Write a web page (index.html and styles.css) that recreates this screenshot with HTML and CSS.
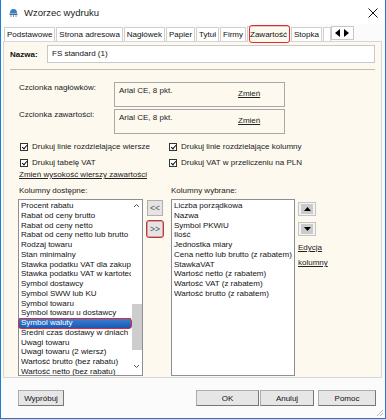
FILE: index.html
```html
<!DOCTYPE html>
<html lang="pl">

<head>
    <meta charset="UTF-8" />
    <title>Wzorzec wydruku</title>
    <link rel="stylesheet" href="styles.css">
</head>

<body>
    <div class="window">
        <div class="titlebar">
            <svg class="app-icon" width="9" height="9" viewBox="0 0 9 9">
                <path d="M1 5 Q1 1 4.5 1 Q8 1 8 5 Z" fill="#3b7fc0" />
                <rect x="0.5" y="5.5" width="8" height="1.4" fill="#2c5f96" />
                <rect x="1.5" y="7.4" width="1" height="1.3" fill="#2c5f96" />
                <rect x="4" y="7.4" width="1" height="1.3" fill="#2c5f96" />
                <rect x="6.5" y="7.4" width="1" height="1.3" fill="#2c5f96" />
            </svg>
            <span class="title">Wzorzec wydruku</span>
            <svg class="close" width="10" height="10" viewBox="0 0 10 10">
                <path d="M0.5 0.5 L9.5 9.5 M9.5 0.5 L0.5 9.5" stroke="#111" stroke-width="1" />
            </svg>
        </div>

        <div class="tabs">
            <span class="tab">Podstawowe</span>
            <span class="tab">Strona adresowa</span>
            <span class="tab">Nagłówek</span>
            <span class="tab">Papier</span>
            <span class="tab">Tytuł</span>
            <span class="tab">Firmy</span>
            <span class="tab active">Zawartość<span class="mark"></span></span>
            <span class="tab">Stopka</span>
            <span class="tab stub"></span>
            <span class="tab-arrows">
                <svg width="7" height="8" viewBox="0 0 7 8"><path d="M6 0 L6 8 L1 4 Z" fill="#000" /></svg>
                <svg width="7" height="8" viewBox="0 0 7 8"><path d="M1 0 L1 8 L6 4 Z" fill="#000" /></svg>
            </span>
        </div>

        <div class="panel">
            <div class="name-row">
                <label class="name-label">Nazwa:</label>
                <div class="text-input">FS standard (1)</div>
            </div>
            <div class="sep"></div>

            <div class="font-row first">
                <span class="font-label">Czcionka nagłówków:</span>
                <div class="font-box">
                    <span>Arial CE, 8 pkt.</span>
                    <a class="font-change">Zmień</a>
                </div>
            </div>
            <div class="font-row">
                <span class="font-label">Czcionka zawartości:</span>
                <div class="font-box">
                    <span>Arial CE, 8 pkt.</span>
                    <a class="font-change">Zmień</a>
                </div>
            </div>

            <div class="checks">
                <span class="check"><span class="box"></span>Drukuj linie rozdzielające wiersze</span>
                <span class="check"><span class="box"></span>Drukuj linie rozdzielające kolumny</span>
                <span class="check"><span class="box"></span>Drukuj tabelę VAT</span>
                <span class="check"><span class="box"></span>Drukuj VAT w przeliczeniu na PLN</span>
            </div>

            <a class="height-link">Zmień wysokość wierszy zawartości</a>

            <div class="col-labels">
                <span class="col-label">Kolumny dostępne:</span>
                <span class="col-label right">Kolumny wybrane:</span>
            </div>

            <div class="columns">
                <div class="list available">
                    <ul class="items">
                        <li>Procent rabatu</li>
                        <li>Rabat od ceny brutto</li>
                        <li>Rabat od ceny netto</li>
                        <li>Rabat od ceny netto lub brutto</li>
                        <li>Rodzaj towaru</li>
                        <li>Stan minimalny</li>
                        <li>Stawka podatku VAT dla zakupu</li>
                        <li>Stawka podatku VAT w kartotece</li>
                        <li>Symbol dostawcy</li>
                        <li>Symbol SWW lub KU</li>
                        <li>Symbol towaru</li>
                        <li>Symbol towaru u dostawcy</li>
                        <li class="selected">Symbol waluty</li>
                        <li>Średni czas dostawy w dniach</li>
                        <li>Uwagi towaru</li>
                        <li>Uwagi towaru (2 wiersz)</li>
                        <li>Wartość brutto (bez rabatu)</li>
                        <li>Wartość netto (bez rabatu)</li>
                    </ul>
                    <div class="scrollbar">
                        <svg class="chev" width="7" height="5" viewBox="0 0 7 5"><path d="M1 4 L3.5 1.5 L6 4" fill="none" stroke="#555" stroke-width="1" /></svg>
                        <div class="thumb"></div>
                        <svg class="chev" width="7" height="5" viewBox="0 0 7 5"><path d="M1 1 L3.5 3.5 L6 1" fill="none" stroke="#555" stroke-width="1" /></svg>
                    </div>
                    <span class="mark sel-mark"></span>
                </div>

                <div class="move-buttons">
                    <button class="move">&lt;&lt;</button>
                    <button class="move add">&gt;&gt;<span class="mark"></span></button>
                </div>

                <div class="list chosen">
                    <ul class="items">
                        <li>Liczba porządkowa</li>
                        <li>Nazwa</li>
                        <li>Symbol PKWiU</li>
                        <li>Ilość</li>
                        <li>Jednostka miary</li>
                        <li>Cena netto lub brutto (z rabatem)</li>
                        <li>StawkaVAT</li>
                        <li>Wartość netto (z rabatem)</li>
                        <li>Wartość VAT (z rabatem)</li>
                        <li>Wartość brutto (z rabatem)</li>
                    </ul>
                </div>

                <div class="order">
                    <button class="order-btn"><span class="inner"><svg width="7" height="4" viewBox="0 0 7 4"><path d="M0 4 L7 4 L3.5 0 Z" fill="#000" /></svg></span></button>
                    <button class="order-btn"><span class="inner"><svg width="7" height="4" viewBox="0 0 7 4"><path d="M0 0 L7 0 L3.5 4 Z" fill="#000" /></svg></span></button>
                    <a class="edit-link">Edycja<br>kolumny</a>
                </div>
            </div>
        </div>

        <div class="footer">
            <button class="btn try">Wypróbuj</button>
            <button class="btn ok">OK</button>
            <button class="btn cancel">Anuluj</button>
            <button class="btn help">Pomoc</button>
            <svg class="grip" width="9" height="9" viewBox="0 0 9 9">
                <path d="M8 2 L2 8 M8 5 L5 8" stroke="#b5b5b5" stroke-width="1" />
            </svg>
        </div>
    </div>
</body>

</html>
```

FILE: styles.css
```css
:root {
    --blue-frame: #1c7cd1;
    --cream: #fdf9ee;
    --panel-border: #d6d6d6;
    --box-border: #a8a8a8;
    --list-border: #8e8f94;
    --mark: #e12a2f;
}

* {
    margin: 0;
    padding: 0;
    box-sizing: border-box;
}

body {
    font-family: 'Liberation Sans', Arial, sans-serif;
    font-size: 8px;
    color: #111;
    background: #fff;
}

.window {
    width: 386px;
    height: 419px;
    border: 1px solid var(--blue-frame);
    border-top: none;
    background: #fbfbfb;
    display: flex;
    flex-direction: column;
    position: relative;
}

/* title bar */

.titlebar {
    height: 24px;
    background: #fff;
    display: flex;
    align-items: center;
    padding: 1px 0 0 8px;
}

.app-icon {
    margin-right: 6px;
}

.title {
    font-size: 9.5px;
    color: #1a1a1a;
}

.close {
    margin-left: auto;
    margin-right: 7px;
}

/* tabs */

.tabs {
    height: 17px;
    display: flex;
    align-items: flex-end;
    padding-left: 3px;
}

.tab {
    height: 14px;
    line-height: 13px;
    padding: 0 2px;
    border: 1px solid #d0d0d0;
    border-bottom: none;
    margin-right: 1px;
    background: #fff;
    white-space: nowrap;
    color: #111;
}

.tab.active {
    height: 16px;
    line-height: 15px;
    background: var(--cream);
    position: relative;
    margin-bottom: -1px;
    z-index: 2;
}

.tab.stub {
    width: 8px;
    margin-right: 0;
}

.tab-arrows {
    height: 14px;
    width: 23px;
    border: 1px solid #c8c8c8;
    background: #fff;
    display: flex;
    align-items: center;
    justify-content: center;
    gap: 2px;
    margin-bottom: 1px;
}

.mark {
    position: absolute;
    border: 1.5px solid var(--mark);
    border-radius: 3px;
    pointer-events: none;
}

.tab.active .mark {
    left: 1px;
    right: -1px;
    top: -2px;
    bottom: -1px;
}

/* panel */

.panel {
    height: 337px;
    margin: 0 3px 0 2px;
    background: var(--cream);
    border: 1px solid var(--panel-border);
    display: flex;
    flex-direction: column;
}

.name-row {
    display: flex;
    align-items: center;
    margin: 3px 0 0 6px;
}

.name-label {
    width: 37px;
    font-weight: bold;
}

.text-input {
    width: 328px;
    height: 18px;
    line-height: 16px;
    padding-left: 4px;
    background: #fff;
    border: 1px solid #c9c9c9;
}

.sep {
    height: 1px;
    margin: 6px 6px 0;
    background: #bdbdbd;
}

.font-row {
    display: flex;
    margin: 2px 0 0 15px;
}

.font-row.first {
    margin-top: 12px;
}

.font-label {
    width: 95px;
    padding-top: 1px;
    color: #222;
}

.font-box {
    width: 171px;
    height: 25px;
    border: 1px solid var(--box-border);
    padding: 3px 0 0 4px;
    display: flex;
    color: #222;
}

.font-change {
    margin: 3px 0 0 auto;
    width: 46px;
    text-decoration: underline;
}

.checks {
    display: grid;
    grid-template-columns: 149px auto;
    row-gap: 5px;
    margin: 7px 0 0 15px;
}

.check {
    display: flex;
    align-items: center;
    height: 11px;
    color: #222;
}

.box {
    width: 8px;
    height: 8px;
    border: 1px solid #333;
    background: #fff;
    margin: 0 4px 0 1px;
    position: relative;
}

.box::after {
    content: "";
    position: absolute;
    left: 1.5px;
    top: 0;
    width: 2px;
    height: 4px;
    border: solid #111;
    border-width: 0 1.3px 1.3px 0;
    transform: rotate(40deg);
}

.height-link {
    margin: 2px 0 0 15px;
    line-height: 10px;
    text-decoration: underline;
    color: #222;
}

.col-labels {
    display: flex;
    margin: 6px 0 0 15px;
    line-height: 10px;
    color: #222;
}

.col-label {
    width: 152px;
}

.columns {
    display: flex;
    margin: 3px 0 0 14px;
}

.list {
    height: 177px;
    background: #fff;
    border: 1px solid var(--list-border);
    display: flex;
}

.list.available {
    width: 125px;
    position: relative;
}

.list.chosen {
    width: 124px;
    overflow: hidden;
}

.items {
    list-style: none;
    flex: 1;
    padding-top: 1px;
    min-width: 0;
    overflow: hidden;
}

.items li {
    height: 9.75px;
    line-height: 9.75px;
    padding-left: 2px;
    white-space: nowrap;
    color: #111;
}

.items li.selected {
    background: linear-gradient(#3c84d6, #1c58b6);
    color: #fff;
}

.sel-mark {
    left: -1px;
    width: 114px;
    top: 118px;
    height: 11px;
}

.scrollbar {
    width: 11px;
    display: flex;
    flex-direction: column;
    align-items: center;
    background: #fff;
}

.scrollbar .chev {
    margin-top: 3px;
}

.scrollbar .thumb {
    width: 10px;
    height: 46px;
    margin-top: 96px;
    background: #cdcdcd;
}

.scrollbar .chev:last-child {
    margin-top: 14px;
}

.move-buttons {
    display: flex;
    flex-direction: column;
    gap: 5px;
    margin: 1px 8px 0 4px;
}

.move {
    width: 16px;
    height: 16px;
    border: 1px solid #b0b0b0;
    background: #e4e4e4;
    font-family: 'Liberation Sans', Arial, sans-serif;
    font-size: 8.5px;
    color: #555;
    position: relative;
}

.move.add .mark {
    left: -2px;
    right: -2px;
    top: -2px;
    bottom: -2px;
}

.order {
    display: flex;
    flex-direction: column;
    margin: 3px 0 0 3px;
}

.order-btn {
    width: 18px;
    height: 14px;
    border: 1px solid #c4c4c4;
    background: #f4f4f4;
    display: flex;
    align-items: center;
    justify-content: center;
    margin-bottom: 6px;
}

.order-btn .inner {
    width: 12px;
    height: 10px;
    background: #cbcbcb;
    display: flex;
    align-items: center;
    justify-content: center;
}

.edit-link {
    line-height: 15px;
    margin-top: -2px;
    text-decoration: underline;
    color: #222;
}

/* footer buttons */

.footer {
    flex: 1;
    display: flex;
    align-items: flex-start;
    padding: 12px 0 0 17px;
    position: relative;
}

.btn {
    height: 16px;
    border: 1px solid #adadad;
    border-right-color: #777;
    border-bottom-color: #777;
    background: #e6e6e6;
    font-family: 'Liberation Sans', Arial, sans-serif;
    font-size: 8px;
    color: #111;
}

.btn.try {
    width: 46px;
}

.btn.ok {
    width: 63px;
    margin-left: 132px;
}

.btn.cancel {
    width: 54px;
    margin-left: 1px;
}

.btn.help {
    width: 58px;
    margin-left: 4px;
}

.grip {
    position: absolute;
    right: 1px;
    bottom: 1px;
}
```
